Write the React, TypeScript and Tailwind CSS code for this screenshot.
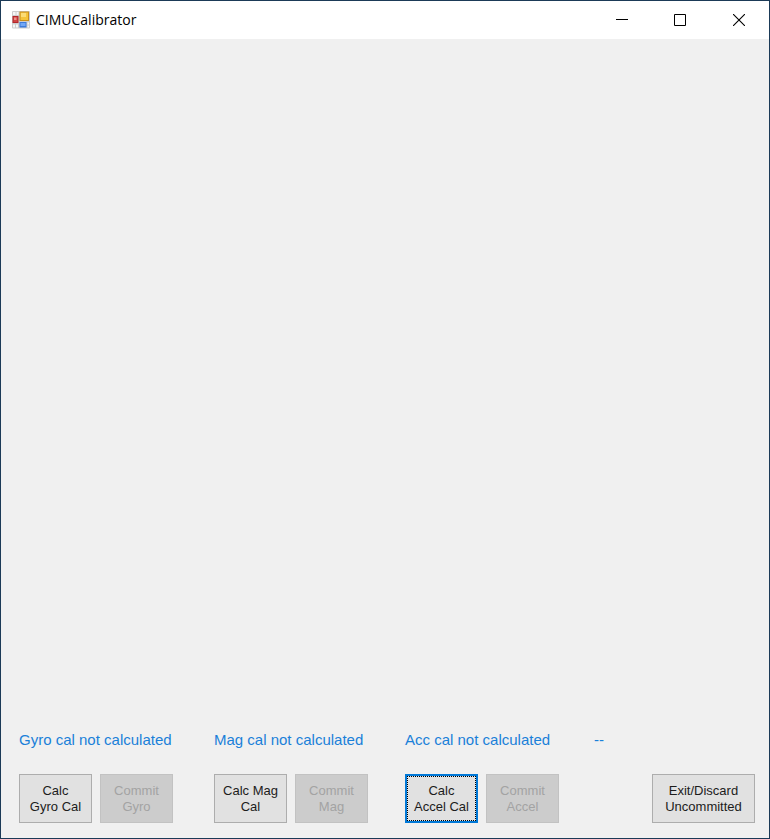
import { useState } from 'react';
import clsx from 'clsx';

type Sensor = {
  id: string;
  status: string;
  calc: [string, string];
  commit: [string, string];
};

const sensors: Sensor[] = [
  { id: 'gyro', status: 'Gyro cal not calculated', calc: ['Calc', 'Gyro Cal'], commit: ['Commit', 'Gyro'] },
  { id: 'mag', status: 'Mag cal not calculated', calc: ['Calc Mag', 'Cal'], commit: ['Commit', 'Mag'] },
  { id: 'accel', status: 'Acc cal not calculated', calc: ['Calc', 'Accel Cal'], commit: ['Commit', 'Accel'] },
];

function AppIcon() {
  return (
    <svg width="18" height="18" viewBox="0 0 18 18" aria-hidden="true">
      <rect width="18" height="17.5" rx="1" fill="#cdcdcd" />
      <path d="M1 1h2.5v3H1zM4.500 1H6.500v3h-2zM1 13.500h2v3H1zM4 13.500h2v3H4zM15.500 11.500H17v2h-1.500zM15.500 14.500H17v2h-1.500z" fill="#f6f6f6" />
      <rect x="0.500" y="5" width="6" height="7" fill="#b3262b" />
      <rect x="1.500" y="6" width="4" height="5" fill="#cf4544" />
      <rect x="2" y="6.500" width="2.500" height="2.500" fill="#eb948a" />
      <rect x="7.500" y="0.500" width="9.500" height="9.500" fill="#c98f1c" />
      <rect x="8.500" y="1.500" width="7.500" height="7.500" fill="#f5c43a" />
      <rect x="9" y="2" width="5" height="4" fill="#fbdc75" />
      <rect x="7.500" y="11" width="7" height="5.500" fill="#3d7bdb" />
      <rect x="8.500" y="12" width="5" height="3" fill="#72a7f5" />
    </svg>
  );
}

function TitleBar() {
  return (
    <header className="flex h-[38px] items-center bg-white pl-[11px]">
      <AppIcon />
      <h1 className="ml-[6px] flex-1 font-['Open_Sans','Noto_Sans',sans-serif] text-[14px] leading-5 text-black">
        CIMUCalibrator
      </h1>
      <button type="button" aria-label="Minimize" className="flex h-full w-[58px] items-center justify-center">
        <svg width="12" height="12" viewBox="0 0 12 12">
          <path d="M0 5.5h12" stroke="#000" />
        </svg>
      </button>
      <button type="button" aria-label="Maximize" className="flex h-full w-[58px] items-center justify-center">
        <svg width="12" height="12" viewBox="0 0 12 12">
          <path d="M.5.5h11v11H.5z" fill="none" stroke="#000" />
        </svg>
      </button>
      <button type="button" aria-label="Close" className="flex h-full w-[60px] items-center justify-center">
        <svg width="12" height="12" viewBox="0 0 12 12">
          <path d="M0 0l12 12M12 0L0 12" stroke="#000" strokeWidth="1.1" />
        </svg>
      </button>
    </header>
  );
}

type FormButtonProps = {
  lines: [string, string];
  active?: boolean;
  disabled?: boolean;
  wide?: boolean;
  onClick?: () => void;
};

function FormButton({ lines, active, disabled, wide, onClick }: FormButtonProps) {
  return (
    <button
      type="button"
      disabled={disabled}
      onClick={onClick}
      className={clsx(
        'h-[49px] shrink-0 text-center text-[13px] leading-4 whitespace-nowrap outline-none',
        wide ? 'w-[103px]' : 'w-[73px]',
        disabled && 'border border-[#c2c2c2] bg-[#cccccc] text-[#a3a3a3]',
        !disabled && !active && 'border border-[#adadad] bg-[#e1e1e1] text-[#1c1c1c]',
        active && 'border-2 border-[#0078d7] bg-[#e1e1e1] text-[#1c1c1c]',
      )}
    >
      <span
        className={clsx(
          'flex h-full flex-col items-center justify-center',
          active && 'border border-dotted border-black',
        )}
      >
        <span>{lines[0]}</span>
        <span>{lines[1]}</span>
      </span>
    </button>
  );
}

export default function App() {
  const [active, setActive] = useState('accel');

  return (
    <div className="flex min-h-screen flex-col border border-[#1b3a57] bg-[#f0f0f0] font-['Liberation_Sans',Arial,sans-serif]">
      <TitleBar />
      <main className="flex flex-1 items-end pr-[14px] pb-[15px] pl-[18px]">
        <div className="grid flex-1 grid-cols-[195px_191px_189px_auto] items-start">
          {sensors.map((sensor) => (
            <section key={sensor.id} className="flex flex-col gap-6">
              <p className="text-[15px] leading-5 whitespace-nowrap text-[#1a80d9]">{sensor.status}</p>
              <div className="flex gap-2">
                <FormButton
                  lines={sensor.calc}
                  active={active === sensor.id}
                  onClick={() => setActive(sensor.id)}
                />
                <FormButton lines={sensor.commit} disabled />
              </div>
            </section>
          ))}
          <p className="text-[15px] leading-5 text-[#1a80d9]">--</p>
        </div>
        <FormButton
          lines={['Exit/Discard', 'Uncommitted']}
          wide
          active={active === 'exit'}
          onClick={() => setActive('exit')}
        />
      </main>
    </div>
  );
}
